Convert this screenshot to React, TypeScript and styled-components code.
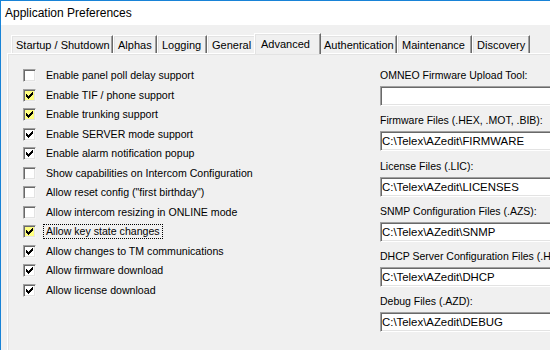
import React from "react";
import styled, { createGlobalStyle, css } from "styled-components";

const Global = createGlobalStyle`
  html, body { margin: 0; padding: 0; overflow: hidden; background: #f0f0f0; }
  body { font-family: "Liberation Sans", Arial, sans-serif; color: #000; }
  #root { width: 550px; height: 350px; overflow: hidden; }
`;

const Window = styled.div`
  width: 560px;
  height: 360px;
  box-sizing: border-box;
  border-top: 1px solid #1883d7;
  border-left: 1px solid #1883d7;
  background: #f0f0f0;
  display: flex;
  flex-direction: column;
`;

const TitleBar = styled.div`
  height: 24px;
  flex-shrink: 0;
  background: #fff;
  display: flex;
  align-items: center;
  padding-left: 4px;
  font-size: 12px;
  color: #000;
`;

const Client = styled.div`
  flex: 1;
  display: flex;
  flex-direction: column;
  padding: 8px 0 0 6px;
`;

const TabStrip = styled.div`
  display: flex;
  align-items: flex-end;
  height: 20px;
  padding-left: 4px;
  position: relative;
  z-index: 1;
`;

const Tab = styled.div<{ $w: number; $active?: boolean }>`
  box-sizing: border-box;
  width: ${(p) => p.$w}px;
  height: 18px;
  flex-shrink: 0;
  display: flex;
  align-items: center;
  padding-left: 4px;
  font-size: 11px;
  white-space: nowrap;
  background: #f0f0f0;
  border-top: 1px solid #fff;
  border-left: 1px solid #fff;
  border-right: 1px solid #696969;
  box-shadow: inset -1px 0 0 #a0a0a0, inset 1px 1px 0 #e3e3e3;
  ${(p) =>
    p.$active &&
    css`
      width: ${p.$w + 4}px;
      height: 21px;
      margin: 0 -2px -1px -2px;
      padding-left: 6px;
      padding-bottom: 1px;
      position: relative;
      z-index: 2;
    `}
`;

const Panel = styled.div`
  flex: 1;
  display: flex;
  border-top: 1px solid #fff;
  border-left: 1px solid #fff;
  box-shadow: inset 1px 1px 0 #e3e3e3;
  padding: 12px 0 0 15px;
`;

const LeftColumn = styled.div`
  width: 357px;
  flex-shrink: 0;
  display: flex;
  flex-direction: column;
`;

const Row = styled.div`
  height: 19.5px;
  display: flex;
  align-items: center;
`;

const Box = styled.div<{ $yellow?: boolean }>`
  box-sizing: border-box;
  width: 13px;
  height: 13px;
  flex-shrink: 0;
  margin-right: 7px;
  background: ${(p) => (p.$yellow ? "#ffff80" : "#fff")};
  border-top: 1px solid #a0a0a0;
  border-left: 1px solid #a0a0a0;
  border-right: 1px solid #f4f4f4;
  border-bottom: 1px solid #f4f4f4;
  box-shadow: inset 1px 1px 0 #696969, inset -1px -1px 0 #e3e3e3;
  display: flex;
  align-items: center;
  justify-content: center;
`;

const Label = styled.span<{ $focus?: boolean }>`
  font-size: 10.6px;
  line-height: 13px;
  padding: 0 2px;
  border: 1px dotted ${(p) => (p.$focus ? "#000" : "transparent")};
  white-space: nowrap;
`;

const RightColumn = styled.div`
  display: flex;
  flex-direction: column;
  gap: 7.3px;
  margin-top: 2px;
  width: 240px;
  flex-shrink: 0;
`;

const Group = styled.div`
  display: flex;
  flex-direction: column;
`;

const FieldLabel = styled.div`
  font-size: 10.5px;
  line-height: 14px;
  margin-bottom: 4px;
  white-space: nowrap;
`;

const PathInput = styled.input`
  box-sizing: border-box;
  width: 220px;
  height: 20px;
  margin: 0;
  padding: 0 0 0 1px;
  font-family: "Liberation Sans", Arial, sans-serif;
  font-size: 11.4px;
  color: #000;
  background: #fff;
  outline: none;
  border-top: 1px solid #a0a0a0;
  border-left: 1px solid #a0a0a0;
  border-right: 1px solid #fff;
  border-bottom: 1px solid #fff;
  box-shadow: inset 1px 1px 0 #696969, inset -1px -1px 0 #e3e3e3;
`;

const Check = () => (
  <svg width="7" height="7" viewBox="0 0 7 7" shapeRendering="crispEdges">
    <path
      fill="#000"
      d="M6 0h1v1h-1zM5 1h2v1h-2zM0 2h1v1h-1zM4 2h3v1h-3zM0 3h2v1h-2zM3 3h3v1h-3zM0 4h5v1h-5zM1 5h3v1h-3zM2 6h1v1h-1z"
    />
  </svg>
);

const tabs = [
  { label: "Startup / Shutdown", w: 102 },
  { label: "Alphas", w: 44 },
  { label: "Logging", w: 50 },
  { label: "General", w: 49 },
  { label: "Advanced", w: 63, active: true },
  { label: "Authentication", w: 78 },
  { label: "Maintenance", w: 75 },
  { label: "Discovery", w: 58 },
];

const options = [
  { label: "Enable panel poll delay support", checked: false },
  { label: "Enable TIF / phone support", checked: true, yellow: true },
  { label: "Enable trunking support", checked: true, yellow: true },
  { label: "Enable SERVER mode support", checked: true },
  { label: "Enable alarm notification popup", checked: true },
  { label: "Show capabilities on Intercom Configuration", checked: false },
  { label: 'Allow reset config ("first birthday")', checked: false },
  { label: "Allow intercom resizing in ONLINE mode", checked: false },
  { label: "Allow key state changes", checked: true, yellow: true, focus: true },
  { label: "Allow changes to TM communications", checked: true },
  { label: "Allow firmware download", checked: true },
  { label: "Allow license download", checked: true },
];

const fields = [
  { label: "OMNEO Firmware Upload Tool:", value: "" },
  { label: "Firmware Files (.HEX, .MOT, .BIB):", value: "C:\\Telex\\AZedit\\FIRMWARE" },
  { label: "License Files (.LIC):", value: "C:\\Telex\\AZedit\\LICENSES" },
  { label: "SNMP Configuration Files (.AZS):", value: "C:\\Telex\\AZedit\\SNMP" },
  { label: "DHCP Server Configuration Files (.HCF):", value: "C:\\Telex\\AZedit\\DHCP" },
  { label: "Debug Files (.AZD):", value: "C:\\Telex\\AZedit\\DEBUG" },
];

export default function App() {
  return (
    <>
      <Global />
      <Window>
        <TitleBar>Application Preferences</TitleBar>
        <Client>
          <TabStrip>
            {tabs.map((t) => (
              <Tab key={t.label} $w={t.w} $active={t.active}>
                {t.label}
              </Tab>
            ))}
          </TabStrip>
          <Panel>
            <LeftColumn>
              {options.map((o) => (
                <Row key={o.label}>
                  <Box $yellow={o.yellow}>{o.checked && <Check />}</Box>
                  <Label $focus={o.focus}>{o.label}</Label>
                </Row>
              ))}
            </LeftColumn>
            <RightColumn>
              {fields.map((f) => (
                <Group key={f.label}>
                  <FieldLabel>{f.label}</FieldLabel>
                  <PathInput readOnly value={f.value} />
                </Group>
              ))}
            </RightColumn>
          </Panel>
        </Client>
      </Window>
    </>
  );
}
